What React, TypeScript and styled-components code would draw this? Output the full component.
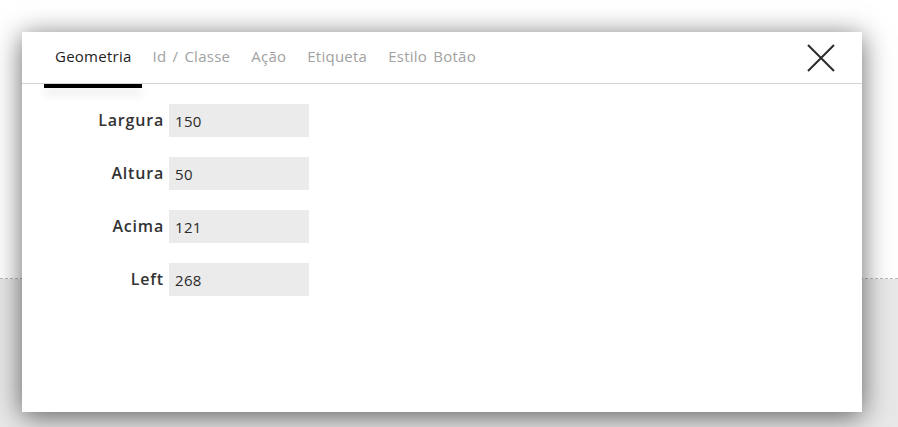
import React, { useState } from "react";
import styled, { createGlobalStyle } from "styled-components";

const Global = createGlobalStyle`
  html, body { margin: 0; padding: 0; }
  body { font-family: "Open Sans", "Lato", sans-serif; overflow: hidden; }
`;

const Page = styled.div`
  position: relative;
  width: 898px;
  height: 427px;
  display: flex;
  flex-direction: column;
`;

const TopArea = styled.div`
  height: 278px;
  background: #ffffff;
  border-bottom: 1px dashed #b8b8b8;
`;

const BottomArea = styled.div`
  flex: 1;
  background: #e8e8e8;
`;

const Modal = styled.div`
  position: absolute;
  left: 22px;
  top: 32px;
  width: 840px;
  height: 380px;
  background: #fff;
  box-shadow: 0 4px 26px rgba(0, 0, 0, 0.6);
  display: flex;
  flex-direction: column;
`;

const TabBar = styled.div`
  height: 51px;
  border-bottom: 1px solid #d4d4d4;
  display: flex;
  align-items: stretch;
  padding: 0 22px;
`;

const Tab = styled.div<{ $active?: boolean }>`
  position: relative;
  display: flex;
  align-items: center;
  padding: 0 10px 3px 11px;
  font-size: 15px;
  letter-spacing: 0.25px;
  word-spacing: 2px;
  color: ${(p) => (p.$active ? "#1e1e1e" : "#a2a2a2")};
  cursor: pointer;
  &::after {
    content: "";
    display: ${(p) => (p.$active ? "block" : "none")};
    position: absolute;
    left: 0;
    right: 0;
    bottom: -5px;
    height: 4px;
    background: #000;
    box-shadow: 0 6px 10px rgba(0, 0, 0, 0.12);
  }
`;

const Spacer = styled.div`
  flex: 1;
`;

const Close = styled.button`
  border: none;
  background: none;
  padding: 0;
  margin-right: 5px;
  width: 28px;
  display: flex;
  align-items: center;
  justify-content: center;
  cursor: pointer;
`;

const Form = styled.div`
  display: grid;
  grid-template-columns: 142px 140px;
  column-gap: 5px;
  row-gap: 20px;
  margin-top: 20px;
  align-items: center;
`;

const Label = styled.label`
  text-align: right;
  font-size: 16px;
  font-weight: 600;
  color: #333;
  letter-spacing: 0.8px;
  padding-bottom: 2px;
`;

const Input = styled.input`
  height: 33px;
  box-sizing: border-box;
  border: none;
  outline: none;
  background: #ebebeb;
  padding: 0 6px;
  font-family: "Open Sans", "Lato", sans-serif;
  font-size: 15px;
  color: #2a2a2a;
  letter-spacing: 0.3px;
  width: 140px;
`;

const tabs = ["Geometria", "Id / Classe", "Ação", "Etiqueta", "Estilo Botão"];
const fields = [
  ["Largura", "150"],
  ["Altura", "50"],
  ["Acima", "121"],
  ["Left", "268"],
];

export default function App() {
  const [active, setActive] = useState(0);
  return (
    <>
      <Global />
      <Page>
        <TopArea />
        <BottomArea />
        <Modal>
          <TabBar>
            {tabs.map((t, i) => (
              <Tab key={t} $active={i === active} onClick={() => setActive(i)}>
                {t}
              </Tab>
            ))}
            <Spacer />
            <Close aria-label="Fechar">
              <svg width="28" height="28" viewBox="0 0 28 28">
                <path d="M1 1 L27 27 M27 1 L1 27" stroke="#2b2b2b" strokeWidth="2" />
              </svg>
            </Close>
          </TabBar>
          <Form>
            {fields.map(([l, v]) => (
              <React.Fragment key={l}>
                <Label>{l}</Label>
                <Input defaultValue={v} />
              </React.Fragment>
            ))}
          </Form>
        </Modal>
      </Page>
    </>
  );
}
